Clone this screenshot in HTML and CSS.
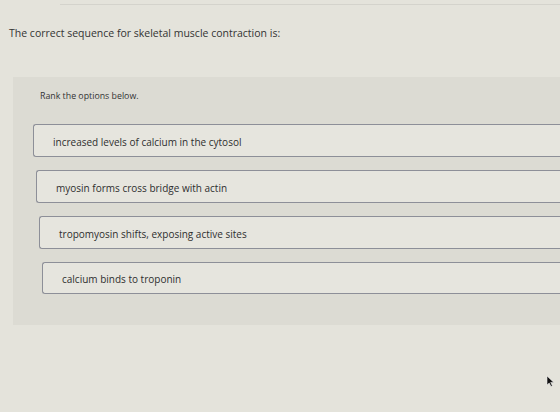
FILE: index.html
```html
<!DOCTYPE html>
<html>
<head>
<meta charset="utf-8">
<link rel="stylesheet" href="styles.css">
</head>
<body>
<div class="page">
  <div class="topline"></div>
  <h1 class="question">The correct sequence for skeletal muscle contraction is:</h1>
  <section class="panel">
    <p class="hint">Rank the options below.</p>
    <ol class="options">
      <li class="option">increased levels of calcium in the cytosol</li>
      <li class="option">myosin forms cross bridge with actin</li>
      <li class="option">tropomyosin shifts, exposing active sites</li>
      <li class="option">calcium binds to troponin</li>
    </ol>
  </section>
  <svg class="cursor" width="9" height="12" viewBox="0 0 9 12"><path d="M1 1 L1 10 L3.2 8 L5 11.5 L6.4 10.8 L4.7 7.4 L7.8 7.4 Z" fill="#111" stroke="#eee" stroke-width="0.6"/></svg>
</div>
</body>
</html>
```

FILE: styles.css
```css
html, body {
  margin: 0;
  padding: 0;
}
body {
  width: 560px;
  height: 412px;
  overflow: hidden;
  background: #e4e3db;
  font-family: "Open Sans", "Lato", sans-serif;
  color: #3a3a3a;
}
.page {
  position: relative;
  height: 412px;
  padding-top: 4px;
  box-sizing: border-box;
}
.topline {
  height: 1px;
  background: #d4d3cc;
  margin-left: 60px;
}
.question {
  margin: 20px 0 0 9px;
  font-size: 10.5px;
  font-weight: 400;
  line-height: 16px;
  color: #333;
}
.panel {
  margin: 36px 0 0 13px;
  height: 248px;
  background: #dcdbd3;
  padding: 12px 0 0 27px;
  box-sizing: border-box;
}
.hint {
  margin: 0;
  font-size: 8.8px;
  line-height: 14px;
  color: #333;
}
.options {
  list-style: none;
  margin: 21px 0 0 -7px;
  padding: 0;
  display: flex;
  flex-direction: column;
  gap: 13px;
}
.option {
  height: 33px;
  box-sizing: border-box;
  border: 1px solid #8d8f98;
  border-right: none;
  border-radius: 3px 0 0 3px;
  background: #e6e5de;
  display: flex;
  align-items: center;
  padding: 2px 0 0 19px;
  font-size: 10px;
  color: #2e2e2e;
}
.option:nth-child(2) { margin-left: 3px; }
.option:nth-child(3) { margin-left: 6px; }
.option:nth-child(4) { margin-left: 9px; height: 32px; }
.cursor {
  position: absolute;
  left: 546px;
  top: 375px;
}
```
